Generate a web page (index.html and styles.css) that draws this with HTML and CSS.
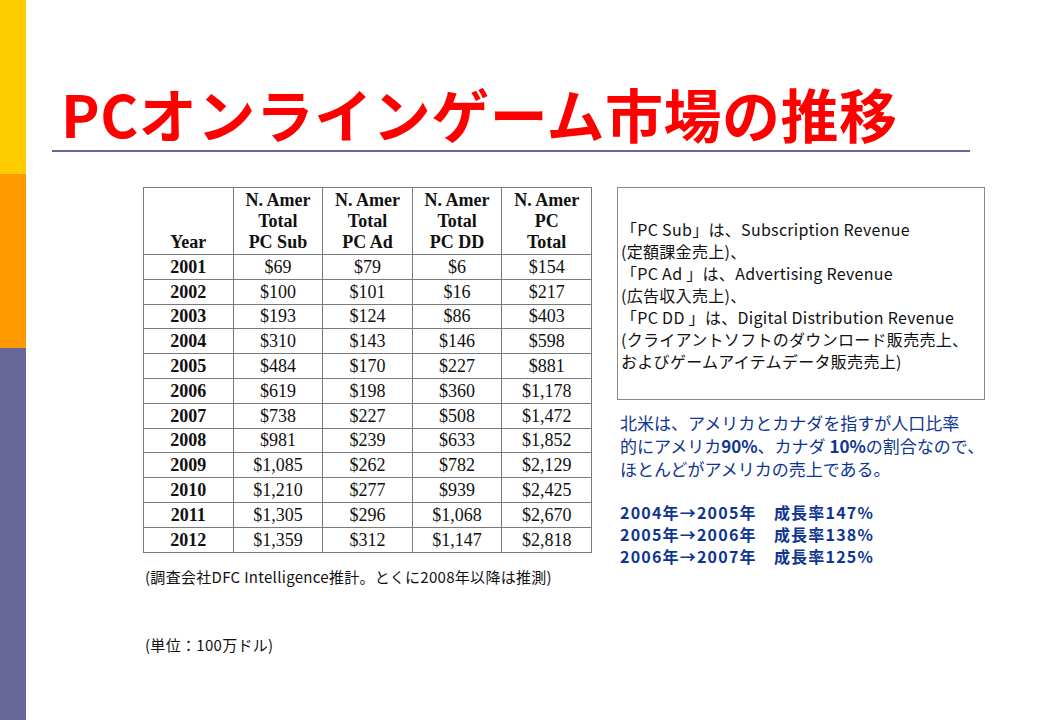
FILE: index.html
```html
<!DOCTYPE html>
<html lang="ja">
<head>
<meta charset="utf-8">
<title>PCオンラインゲーム市場の推移</title>
<link rel="stylesheet" href="styles.css">
</head>
<body>
<div class="slide">
  <div class="sidebar">
    <div class="band band-yellow"></div>
    <div class="band band-orange"></div>
    <div class="band band-blue"></div>
  </div>
  <div class="main">
    <h1 class="title">PCオンラインゲーム市場の推移</h1>
    <div class="rule"></div>
    <div class="content">
      <div class="left-col">
        <table class="data">
          <thead>
            <tr>
              <th>Year</th>
              <th>N. Amer<br>Total<br>PC Sub</th>
              <th>N. Amer<br>Total<br>PC Ad</th>
              <th>N. Amer<br>Total<br>PC DD</th>
              <th>N. Amer<br>PC<br>Total</th>
            </tr>
          </thead>
          <tbody>
            <tr><th>2001</th><td>$69</td><td>$79</td><td>$6</td><td>$154</td></tr>
            <tr><th>2002</th><td>$100</td><td>$101</td><td>$16</td><td>$217</td></tr>
            <tr><th>2003</th><td>$193</td><td>$124</td><td>$86</td><td>$403</td></tr>
            <tr><th>2004</th><td>$310</td><td>$143</td><td>$146</td><td>$598</td></tr>
            <tr><th>2005</th><td>$484</td><td>$170</td><td>$227</td><td>$881</td></tr>
            <tr><th>2006</th><td>$619</td><td>$198</td><td>$360</td><td>$1,178</td></tr>
            <tr><th>2007</th><td>$738</td><td>$227</td><td>$508</td><td>$1,472</td></tr>
            <tr><th>2008</th><td>$981</td><td>$239</td><td>$633</td><td>$1,852</td></tr>
            <tr><th>2009</th><td>$1,085</td><td>$262</td><td>$782</td><td>$2,129</td></tr>
            <tr><th>2010</th><td>$1,210</td><td>$277</td><td>$939</td><td>$2,425</td></tr>
            <tr><th>2011</th><td>$1,305</td><td>$296</td><td>$1,068</td><td>$2,670</td></tr>
            <tr><th>2012</th><td>$1,359</td><td>$312</td><td>$1,147</td><td>$2,818</td></tr>
          </tbody>
        </table>
        <p class="note note-source">(調査会社DFC Intelligence推計。とくに2008年以降は推測)</p>
        <p class="note note-unit">(単位：100万ドル)</p>
      </div>
      <div class="right-col">
        <div class="legend-box">
          <p>「PC Sub」は、Subscription Revenue<br>(定額課金売上)、<br>「PC Ad 」は、Advertising Revenue<br>(広告収入売上)、<br>「PC DD 」は、Digital Distribution Revenue<br>(クライアントソフトのダウンロード販売売上、<br>およびゲームアイテムデータ販売売上)</p>
        </div>
        <p class="blue-text intro">北米は、アメリカとカナダを指すが人口比率<br>的にアメリカ<b>90%</b>、カナダ <b>10%</b>の割合なので、<br>ほとんどがアメリカの売上である。</p>
        <div class="growth">
          <p class="blue-text growth-line">2004年→2005年　成長率147%</p>
          <p class="blue-text growth-line">2005年→2006年　成長率138%</p>
          <p class="blue-text growth-line">2006年→2007年　成長率125%</p>
        </div>
      </div>
    </div>
  </div>
</div>
</body>
</html>
```

FILE: styles.css
```css
* {
  box-sizing: border-box;
}

html, body {
  margin: 0;
  padding: 0;
  background: #ffffff;
}

.slide {
  width: 1040px;
  height: 720px;
  display: flex;
  background: #ffffff;
  overflow: hidden;
}

.sidebar {
  width: 26px;
  flex: 0 0 26px;
  display: flex;
  flex-direction: column;
}

.band-yellow {
  height: 174px;
  background: #ffcc00;
}

.band-orange {
  height: 174px;
  background: #ff9900;
}

.band-blue {
  flex: 1;
  background: #666699;
}

.main {
  flex: 1;
  padding-left: 26px;
}

.title {
  margin: 80px 0 0 9px;
  height: 70px;
  font-family: "Noto Sans CJK JP", sans-serif;
  font-weight: 700;
  font-size: 58px;
  line-height: 66px;
  color: #ff0000;
  letter-spacing: 0.5px;
  white-space: nowrap;
}

.rule {
  width: 918px;
  height: 2px;
  background: #666699;
}

.content {
  display: flex;
  margin-top: 35px;
  margin-left: 91px;
  gap: 25px;
}

.left-col {
  width: 449px;
}

.data {
  border-collapse: collapse;
  width: 449px;
  font-family: "Liberation Serif", "Times New Roman", serif;
  font-size: 18px;
  color: #111111;
  table-layout: fixed;
}

.data th,
.data td {
  border: 1px solid #7a7a7a;
  text-align: center;
  padding: 0;
}

.data thead th {
  height: 67px;
  vertical-align: bottom;
  line-height: 21px;
  padding-bottom: 1px;
  font-weight: 700;
}

.data tbody th,
.data tbody td {
  height: 24.8px;
  line-height: 22px;
}

.data tbody th {
  font-weight: 700;
}

.data tbody td {
  font-weight: 400;
}

.note {
  margin: 0;
  font-family: "Noto Sans CJK JP", sans-serif;
  font-size: 15px;
  letter-spacing: 0.3px;
  line-height: 20px;
  color: #111111;
  padding-left: 2px;
  white-space: nowrap;
}

.note-source {
  margin-top: 14px;
}

.note-unit {
  margin-top: 48px;
}

.right-col {
  width: 368px;
}

.legend-box {
  border: 1px solid #8a8a8a;
  height: 213px;
  padding: 30px 0 0 3px;
}

.legend-box p {
  margin: 0;
  font-family: "Noto Sans CJK JP", sans-serif;
  font-size: 16px;
  letter-spacing: 0.3px;
  line-height: 22px;
  color: #111111;
  white-space: nowrap;
}

.blue-text {
  margin: 0;
  padding-left: 3px;
  font-family: "Noto Sans CJK JP", sans-serif;
  font-size: 17px;
  line-height: 23px;
  color: #0f3592;
  white-space: nowrap;
}

.intro {
  margin-top: 11px;
}

.blue-text b {
  font-weight: 700;
}

.growth {
  margin-top: 21px;
  display: flex;
  flex-direction: column;
}

.growth-line {
  font-weight: 700;
  font-size: 16px;
  letter-spacing: 1.2px;
  line-height: 22px;
  height: 22px;
}
```
